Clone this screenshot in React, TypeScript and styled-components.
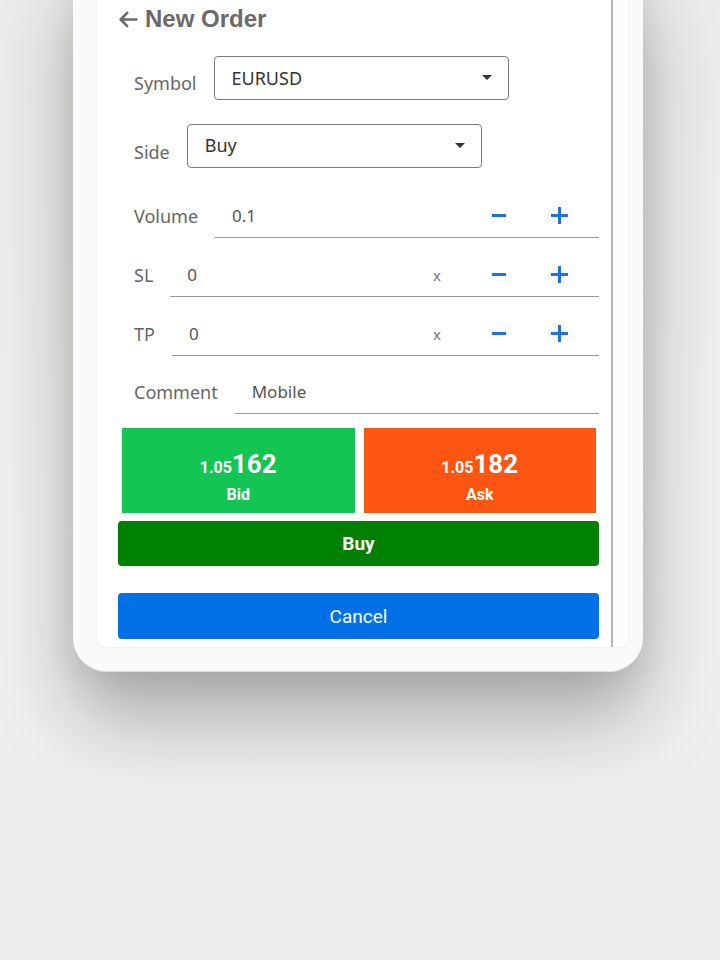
import React from "react";
import styled, { createGlobalStyle } from "styled-components";

const Global = createGlobalStyle`
  html, body { margin: 0; padding: 0; }
  body { background: #eeeeec; font-family: "Noto Sans", "Open Sans", sans-serif; overflow: hidden; }
`;

const Stage = styled.div`
  width: 720px;
  height: 960px;
  background: linear-gradient(180deg, #ebebea 0%, #efefee 60%, #eeeeec 100%);
  overflow: hidden;
`;

const Phone = styled.div`
  margin: -40px 0 0 73px;
  width: 570px;
  box-sizing: border-box;
  padding: 20px 13px 23px 23px;
  background: #fafafa;
  border-radius: 34px;
  border-bottom: 1px solid #e2e2e2;
  box-shadow: 0 50px 80px rgba(0, 0, 0, 0.26), 0 10px 40px rgba(0, 0, 0, 0.1);
`;

const Screen = styled.div`
  display: flex;
  background: #fff;
  border-radius: 10px;
  border: 1px solid #f0f0f0;
  overflow: hidden;
`;

const Content = styled.div`
  flex: 1;
  padding: 17px 12px 8px 21px;
  border-right: 2px solid #b4b4b4;
`;

const Gutter = styled.div`
  width: 16px;
  background: #fcfcfc;
`;

const Title = styled.div`
  display: flex;
  align-items: center;
  gap: 6px;
  height: 42px;
  font-family: "Liberation Sans", Arial, sans-serif;
  font-weight: 700;
  font-size: 24px;
  color: #6a6a6a;
`;

const Row = styled.div<{ $mt?: number }>`
  display: flex;
  align-items: center;
  padding-left: 16px;
  gap: 17px;
  margin-top: ${(p) => p.$mt ?? 0}px;
`;

const Label = styled.div<{ $drop?: number }>`
  font-size: 18px;
  color: #666;
  padding-top: ${(p) => p.$drop ?? 0}px;
  white-space: nowrap;
`;

const Select = styled.div`
  width: 295px;
  height: 44px;
  box-sizing: border-box;
  border: 1.5px solid #7c7c7c;
  border-radius: 4px;
  display: flex;
  align-items: center;
  justify-content: space-between;
  padding: 0 16px 0 17px;
  font-size: 18px;
  color: #333;
`;

const SelectText = styled.span<{ $up?: number }>`
  margin-top: -${(p) => p.$up ?? 0}px;
`;

const Caret = styled.span`
  width: 0;
  height: 0;
  border-left: 5px solid transparent;
  border-right: 5px solid transparent;
  border-top: 5px solid #333;
  margin-top: -2px;
`;

const Field = styled.div`
  flex: 1;
  height: 44px;
  box-sizing: border-box;
  border-bottom: 1.5px solid #9a9a9a;
  display: flex;
  align-items: center;
  padding-left: 17px;
  font-size: 17px;
  color: #555;
`;

const Value = styled.span`
  flex: 1;
`;

const Clear = styled.span`
  width: 20px;
  text-align: center;
  font-size: 15px;
  color: #777;
  margin-right: 42px;
`;

const Step = styled.span`
  width: 20px;
  height: 20px;
  display: flex;
  align-items: center;
  justify-content: center;
`;

const Steps = styled.div`
  display: flex;
  align-items: center;
  gap: 40px;
  margin-right: 30px;
`;

const Quotes = styled.div`
  display: flex;
  gap: 9px;
  margin: 14px 3px 0 4px;
`;

const Quote = styled.div<{ $bg: string }>`
  flex: 1;
  height: 85px;
  box-sizing: border-box;
  padding-top: 14px;
  background: ${(p) => p.$bg};
  color: #fff;
  display: flex;
  flex-direction: column;
  align-items: center;
  justify-content: center;
  font-family: "Roboto", "Liberation Sans", sans-serif;
  font-weight: 700;
`;

const Price = styled.div`
  display: flex;
  align-items: baseline;
  line-height: 1;
`;

const Small = styled.span`
  font-size: 16px;
`;

const Big = styled.span`
  font-size: 26px;
`;

const QLabel = styled.div`
  font-size: 16px;
  margin-top: 8px;
`;

const Button = styled.div<{ $bg: string; $bold?: boolean; $mt: number; $h: number }>`
  height: ${(p) => p.$h}px;
  margin-top: ${(p) => p.$mt}px;
  background: ${(p) => p.$bg};
  border-radius: 4px;
  color: #fff;
  display: flex;
  align-items: center;
  justify-content: center;
  font-family: "Roboto", "Liberation Sans", sans-serif;
  font-size: 19px;
  font-weight: ${(p) => (p.$bold ? 700 : 400)};
`;

const Arrow = () => (
  <svg width="21" height="21" viewBox="0 0 448 512" fill="#6a6a6a">
    <path d="M9.4 233.4c-12.5 12.5-12.5 32.8 0 45.3l160 160c12.5 12.5 32.8 12.5 45.3 0s12.5-32.8 0-45.3L109.2 288H416c17.7 0 32-14.3 32-32s-14.3-32-32-32H109.3L214.6 118.6c12.5-12.5 12.5-32.8 0-45.3s-32.8-12.5-45.3 0l-160 160z" />
  </svg>
);

const Minus = () => (
  <svg width="14" height="3" viewBox="0 0 14 3">
    <rect x="0" y="0" width="14" height="3" fill="#1a73e8" />
  </svg>
);

const Plus = () => (
  <svg width="17" height="17" viewBox="0 0 17 17">
    <rect x="0" y="7" width="17" height="3" fill="#1a73e8" />
    <rect x="7" y="0" width="3" height="17" fill="#1a73e8" />
  </svg>
);

const Steppers = () => (
  <Steps>
    <Step><Minus /></Step>
    <Step><Plus /></Step>
  </Steps>
);

export default function App() {
  return (
    <Stage>
      <Global />
      <Phone>
        <Screen>
          <Content>
            <Title>
              <Arrow />
              New Order
            </Title>
            <Row $mt={16}>
              <Label $drop={10}>Symbol</Label>
              <Select>
                <SelectText>EURUSD</SelectText>
                <Caret />
              </Select>
            </Row>
            <Row $mt={24}>
              <Label $drop={12}>Side</Label>
              <Select>
                <SelectText $up={2}>Buy</SelectText>
                <Caret />
              </Select>
            </Row>
            <Row $mt={26}>
              <Label>Volume</Label>
              <Field>
                <Value>0.1</Value>
                <Steppers />
              </Field>
            </Row>
            <Row $mt={15}>
              <Label>SL</Label>
              <Field>
                <Value>0</Value>
                <Clear>x</Clear>
                <Steppers />
              </Field>
            </Row>
            <Row $mt={15}>
              <Label>TP</Label>
              <Field>
                <Value>0</Value>
                <Clear>x</Clear>
                <Steppers />
              </Field>
            </Row>
            <Row $mt={14}>
              <Label>Comment</Label>
              <Field>
                <Value>Mobile</Value>
              </Field>
            </Row>
            <Quotes>
              <Quote $bg="#13c654">
                <Price>
                  <Small>1.05</Small>
                  <Big>162</Big>
                </Price>
                <QLabel>Bid</QLabel>
              </Quote>
              <Quote $bg="#fd5512">
                <Price>
                  <Small>1.05</Small>
                  <Big>182</Big>
                </Price>
                <QLabel>Ask</QLabel>
              </Quote>
            </Quotes>
            <Button $bg="#008000" $bold $mt={8} $h={45}>Buy</Button>
            <Button $bg="#0070e6" $mt={27} $h={46}>Cancel</Button>
          </Content>
          <Gutter />
        </Screen>
      </Phone>
    </Stage>
  );
}
